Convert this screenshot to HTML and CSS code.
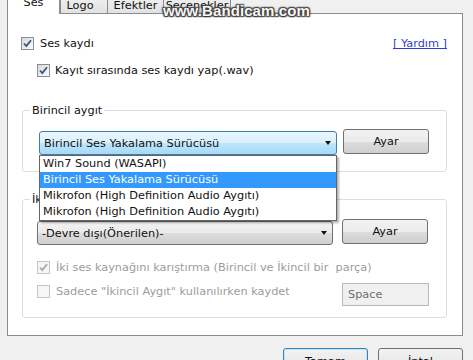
FILE: index.html
```html
<!DOCTYPE html>
<html lang="tr">
<head>
  <meta charset="UTF-8" />
  <meta name="viewport" content="width=device-width, initial-scale=1.0" />
  <title>Ses ayarları</title>
  <link rel="stylesheet" href="styles.css">
</head>
<body>
  <div class="dialog">
    <div class="tabs">
      <div class="tab active">Ses</div>
      <div class="tab tab-logo">Logo</div>
      <div class="tab tab-efekt">Efektler</div>
      <div class="tab tab-secenek">Seçenekler</div>
    </div>

    <div class="panel">
      <div class="row-top">
        <label class="check">
          <span class="box"><svg width="11" height="11" viewBox="0 0 11 11"><path d="M2 5.5 L4.3 8 L9 2.2" fill="none" stroke="#3d5488" stroke-width="1.8"/></svg></span>
          Ses kaydı
        </label>
        <a class="yardim" href="#">[ Yardım ]</a>
      </div>
      <label class="check sub">
        <span class="box"><svg width="11" height="11" viewBox="0 0 11 11"><path d="M2 5.5 L4.3 8 L9 2.2" fill="none" stroke="#3d5488" stroke-width="1.8"/></svg></span>
        Kayıt sırasında ses kaydı yap(.wav)
      </label>

      <fieldset class="grup">
        <legend>Birincil aygıt</legend>
        <div class="aygit-satir">
          <div class="combo-wrap">
            <div class="combo focus">Birincil Ses Yakalama Sürücüsü<span class="ok"></span></div>
            <ul class="liste">
              <li>Win7 Sound (WASAPI)</li>
              <li class="secili">Birincil Ses Yakalama Sürücüsü</li>
              <li>Mikrofon (High Definition Audio Aygıtı)</li>
              <li>Mikrofon (High Definition Audio Aygıtı)</li>
            </ul>
          </div>
          <button class="btn">Ayar</button>
        </div>
      </fieldset>

      <fieldset class="grup ikinci">
        <legend>İkincil aygıt</legend>
        <div class="aygit-satir">
          <div class="combo combo-iki">-Devre dışı(Önerilen)-<span class="ok"></span></div>
          <button class="btn btn-iki">Ayar</button>
        </div>
        <label class="check pasif karistir">
          <span class="box"><svg width="11" height="11" viewBox="0 0 11 11"><path d="M2 5.5 L4.3 8 L9 2.2" fill="none" stroke="#a8a8a8" stroke-width="1.8"/></svg></span>
          İki ses kaynağını karıştırma (Birincil ve İkincil bir &nbsp;parça)
        </label>
        <div class="sadece-satir">
          <label class="check pasif">
            <span class="box"></span>
            Sadece "İkincil Aygıt" kullanılırken kaydet
          </label>
          <div class="tus-kutu">Space</div>
        </div>
      </fieldset>
    </div>

    <div class="alt">
      <button class="btn alt-btn varsayilan">Tamam</button>
      <button class="btn alt-btn">İptal</button>
    </div>

    <div class="filigran">www.Bandicam.com</div>
  </div>
</body>
</html>
```

FILE: styles.css
```css
body {
  margin: 0;
  padding: 0;
  font-family: 'DejaVu Sans', Tahoma, sans-serif;
  font-size: 11.3px;
  color: #111;
}

.dialog {
  position: relative;
  width: 473px;
  height: 360px;
  overflow: hidden;
  background-color: #f0f0f0;
}

/* sekmeler */
.tabs {
  display: flex;
  align-items: flex-end;
  height: 13px;
  padding-left: 7px;
}

.tab {
  box-sizing: border-box;
  height: 21px;
  padding-top: 4px;
  line-height: 17px;
  text-align: center;
  border: 1px solid #898c95;
  border-bottom: none;
  margin-left: -1px;
  background: linear-gradient(#f3f3f3, #e2e2e2);
  white-space: nowrap;
  overflow: hidden;
}

.tab.active {
  position: relative;
  z-index: 2;
  width: 53px;
  height: 24px;
  margin-left: 0;
  margin-bottom: -1px;
  padding-top: 3px;
  background: #fff;
}

.tab-logo {
  width: 48px;
  margin-left: 0;
  padding-right: 8px;
}

.tab-efekt {
  width: 57px;
}

.tab-secenek {
  width: 68px;
}

/* panel */
.panel {
  box-sizing: border-box;
  width: 456px;
  height: 323px;
  margin-left: 7px;
  padding: 22px 15px 0 13px;
  border: 1px solid #898c95;
  background-color: #fff;
}

.row-top {
  display: flex;
  justify-content: space-between;
  align-items: center;
}

.check {
  display: flex;
  align-items: center;
  gap: 6px;
  line-height: 15px;
  white-space: nowrap;
}

.check.sub {
  margin-top: 12px;
  padding-left: 16px;
  gap: 5px;
}

.box {
  box-sizing: border-box;
  display: flex;
  align-items: center;
  justify-content: center;
  width: 13px;
  height: 13px;
  border: 1px solid #8e8f8f;
  background: linear-gradient(135deg, #d8d8d8, #fdfdfd);
}

.pasif {
  color: #9c9c9c;
}

.pasif .box {
  border-color: #c4c4c4;
  background: #f6f6f6;
}

.yardim {
  color: #2d3fd0;
  text-decoration: underline;
  line-height: 15px;
}

/* grup kutulari */
.grup {
  margin: 25px 0 0 1px;
  padding: 0 17px 16px 16px;
  border: 1px solid #d5dfe5;
  border-radius: 3px;
}

.grup legend {
  margin-left: -9px;
  padding: 0 2px;
  line-height: 15px;
}

.grup.ikinci {
  margin-top: 20px;
  padding-bottom: 11px;
}

.aygit-satir {
  display: flex;
  align-items: flex-start;
  gap: 6px;
  margin-top: 11px;
}

.ikinci .aygit-satir {
  margin-top: 12px;
}

.combo-wrap {
  position: relative;
  z-index: 3;
  margin-top: 2px;
}

.combo {
  box-sizing: border-box;
  display: flex;
  justify-content: space-between;
  align-items: center;
  width: 298px;
  height: 24px;
  padding: 0 5px 0 4px;
  border: 1px solid #707070;
  border-radius: 3px;
  background: linear-gradient(#f2f2f2 0%, #ebebeb 50%, #dddddd 51%, #cfcfcf 100%);
  white-space: nowrap;
}

.combo.focus {
  border-color: #3c7fb1;
  background: linear-gradient(#eaf6fd 0%, #d9f0fc 50%, #bee6fd 51%, #a7d9f5 100%);
}

.combo-iki {
  width: 296px;
  margin-left: -2px;
  margin-top: 2px;
}

.ok {
  width: 0;
  height: 0;
  border-left: 3.5px solid transparent;
  border-right: 3.5px solid transparent;
  border-top: 4px solid #111;
}

.liste {
  position: absolute;
  top: 100%;
  left: 0;
  box-sizing: border-box;
  width: 298px;
  margin: 0;
  padding: 0;
  list-style: none;
  background-color: #fff;
  border: 1px solid #646464;
  box-shadow: 2px 2px 2px rgba(0, 0, 0, 0.3);
}

.liste li {
  height: 16px;
  line-height: 16px;
  padding-left: 3px;
  white-space: nowrap;
}

.liste li.secili {
  background-color: #3399ff;
  color: #fff;
}

.btn {
  box-sizing: border-box;
  width: 86px;
  height: 25px;
  padding: 0;
  font-family: inherit;
  font-size: inherit;
  color: #111;
  border: 1px solid #707070;
  border-radius: 3px;
  background: linear-gradient(#f2f2f2 0%, #ebebeb 50%, #dddddd 51%, #cfcfcf 100%);
}

.btn-iki {
  margin-left: 3px;
}

.karistir {
  margin-top: 15px;
  margin-left: -2px;
}

.sadece-satir {
  display: flex;
  justify-content: space-between;
  align-items: flex-start;
  margin-top: 8px;
  margin-left: -2px;
}

.sadece-satir .check {
  margin-top: 1px;
}

.tus-kutu {
  box-sizing: border-box;
  width: 87px;
  height: 23px;
  padding-left: 5px;
  line-height: 21px;
  color: #6f6f6f;
  border: 1px solid #b8b8b8;
  background-color: #f0f0f0;
}

/* alt butonlar */
.alt {
  display: flex;
  justify-content: flex-end;
  gap: 10px;
  margin-top: 12px;
  padding-right: 10px;
}

.alt-btn {
  width: 85px;
  height: 23px;
  padding-top: 4px;
}

.alt-btn.varsayilan {
  border-color: #3c7fb1;
  box-shadow: inset 0 0 0 1px #bfe6fd;
}

/* kayit programinin filigrani */
.filigran {
  position: absolute;
  top: 2px;
  left: 163px;
  z-index: 5;
  font-family: 'Liberation Sans', Arial, sans-serif;
  font-size: 15px;
  font-weight: bold;
  color: #f6f6f6;
  letter-spacing: 0.1px;
  text-shadow: 1px 1px 1px #333, -1px -1px 1px #444, 1px -1px 1px #444, -1px 1px 1px #444, 0 0 3px #555;
}
```
